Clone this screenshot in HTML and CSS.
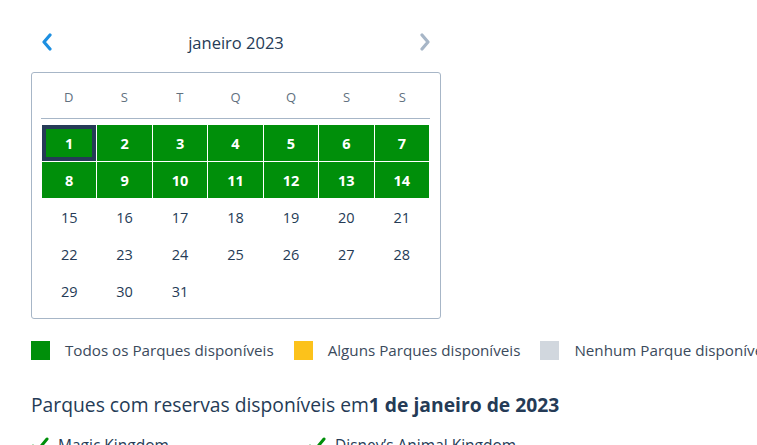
FILE: index.html
```html
<!DOCTYPE html>
<html lang="pt">
<head>
  <meta charset="UTF-8" />
  <meta name="viewport" content="width=device-width, initial-scale=1.0"/>
  <title>Disponibilidade de Parques</title>
  <link rel="stylesheet" href="styles.css">
</head>
<body>
  <div class="page">
    <div class="cal-wrap">
      <div class="cal-header">
        <button class="nav-btn prev" aria-label="Mês anterior">
          <svg width="14" height="18" viewBox="0 0 14 18"><path d="M10 2 L4 9 L10 16" fill="none" stroke="currentColor" stroke-width="3.2" stroke-linecap="round" stroke-linejoin="round"/></svg>
        </button>
        <div class="cal-title">janeiro 2023</div>
        <button class="nav-btn next" aria-label="Próximo mês">
          <svg width="14" height="18" viewBox="0 0 14 18"><path d="M4 2 L10 9 L4 16" fill="none" stroke="currentColor" stroke-width="3.2" stroke-linecap="round" stroke-linejoin="round"/></svg>
        </button>
      </div>

      <div class="calendar">
        <div class="weekdays">
          <span>D</span><span>S</span><span>T</span><span>Q</span><span>Q</span><span>S</span><span>S</span>
        </div>
        <div class="days">
          <div class="day all selected">1</div>
          <div class="day all">2</div>
          <div class="day all">3</div>
          <div class="day all">4</div>
          <div class="day all">5</div>
          <div class="day all">6</div>
          <div class="day all">7</div>
          <div class="day all">8</div>
          <div class="day all">9</div>
          <div class="day all">10</div>
          <div class="day all">11</div>
          <div class="day all">12</div>
          <div class="day all">13</div>
          <div class="day all">14</div>
          <div class="day">15</div>
          <div class="day">16</div>
          <div class="day">17</div>
          <div class="day">18</div>
          <div class="day">19</div>
          <div class="day">20</div>
          <div class="day">21</div>
          <div class="day">22</div>
          <div class="day">23</div>
          <div class="day">24</div>
          <div class="day">25</div>
          <div class="day">26</div>
          <div class="day">27</div>
          <div class="day">28</div>
          <div class="day">29</div>
          <div class="day">30</div>
          <div class="day">31</div>
        </div>
      </div>
    </div>

    <div class="legend">
      <div class="legend-item"><span class="swatch green"></span>Todos os Parques disponíveis</div>
      <div class="legend-item"><span class="swatch yellow"></span>Alguns Parques disponíveis</div>
      <div class="legend-item"><span class="swatch grey"></span>Nenhum Parque disponível</div>
    </div>

    <h2 class="parks-title">Parques com reservas disponíveis em<strong>1 de janeiro de 2023</strong></h2>

    <ul class="parks">
      <li><svg class="check" width="18" height="16" viewBox="0 0 18 16"><path d="M2 9 L6.5 13.5 L16 2" fill="none" stroke="currentColor" stroke-width="3" stroke-linecap="round" stroke-linejoin="round"/></svg>Magic Kingdom</li>
      <li><svg class="check" width="18" height="16" viewBox="0 0 18 16"><path d="M2 9 L6.5 13.5 L16 2" fill="none" stroke="currentColor" stroke-width="3" stroke-linecap="round" stroke-linejoin="round"/></svg>Disney’s Animal Kingdom</li>
      <li><svg class="check" width="18" height="16" viewBox="0 0 18 16"><path d="M2 9 L6.5 13.5 L16 2" fill="none" stroke="currentColor" stroke-width="3" stroke-linecap="round" stroke-linejoin="round"/></svg>EPCOT</li>
      <li><svg class="check" width="18" height="16" viewBox="0 0 18 16"><path d="M2 9 L6.5 13.5 L16 2" fill="none" stroke="currentColor" stroke-width="3" stroke-linecap="round" stroke-linejoin="round"/></svg>Disney’s Hollywood Studios</li>
    </ul>
  </div>
</body>
</html>
```

FILE: styles.css
```css
:root {
  --navy: #253b56;
  --text: #3b4a5c;
  --muted: #62717f;
  --border: #a7b6c7;
  --green: #008f0a;
  --yellow: #fcc21b;
  --grey: #d1d7de;
  --blue: #1d8fe1;
}

body {
  margin: 0;
  padding: 0;
  background: #fff;
  font-family: 'Open Sans', 'Noto Sans', sans-serif;
  color: var(--navy);
  overflow: hidden;
}

.page {
  padding: 28px 0 0 31px;
  white-space: nowrap;
}

.cal-wrap {
  width: 410px;
}

.cal-header {
  display: flex;
  align-items: center;
  justify-content: space-between;
  height: 28px;
  padding: 0 9px;
  margin-bottom: 16px;
}

.nav-btn {
  background: none;
  border: none;
  padding: 0;
  width: 14px;
  height: 18px;
  cursor: pointer;
  display: flex;
}

.nav-btn.prev {
  color: var(--blue);
}

.nav-btn.next {
  color: var(--border);
}

.cal-title {
  font-size: 16.5px;
  color: var(--navy);
}

.calendar {
  border: 1px solid var(--border);
  border-radius: 3px;
  padding: 0 10px 9px 9px;
}

.weekdays {
  display: grid;
  grid-template-columns: repeat(7, 1fr);
  padding: 16px 0 12px;
  border-bottom: 1px solid var(--border);
  margin-bottom: 6px;
  font-size: 13px;
  line-height: 17px;
  color: var(--muted);
  text-align: center;
}

.days {
  display: grid;
  grid-template-columns: repeat(7, 1fr);
  grid-auto-rows: 36px;
  gap: 1px;
  margin: 0 1px 0 1px;
}

.day {
  display: flex;
  align-items: center;
  justify-content: center;
  font-size: 14.5px;
  color: var(--navy);
}

.day.all {
  background: var(--green);
  color: #fff;
  font-weight: 700;
}

.day.selected {
  box-shadow: inset 0 0 0 4px var(--navy);
}

.legend {
  display: flex;
  gap: 20px;
  margin-top: 21px;
  font-size: 15.2px;
  color: var(--text);
}

.legend-item {
  display: flex;
  align-items: center;
  gap: 15px;
}

.swatch {
  width: 19px;
  height: 19px;
  flex-shrink: 0;
}

.swatch.green { background: var(--green); }
.swatch.yellow { background: var(--yellow); }
.swatch.grey { background: var(--grey); }

.parks-title {
  margin: 31px 0 0;
  font-size: 19.3px;
  font-weight: 400;
  color: var(--navy);
}

.parks-title strong {
  font-weight: 700;
}

.parks {
  list-style: none;
  margin: 16px 0 0;
  padding: 0;
  display: grid;
  grid-template-columns: 277px 277px;
  row-gap: 10px;
  font-size: 15.5px;
  color: var(--navy);
}

.parks li {
  display: flex;
  align-items: center;
  gap: 9px;
}

.check {
  color: var(--green);
  flex-shrink: 0;
}
```
